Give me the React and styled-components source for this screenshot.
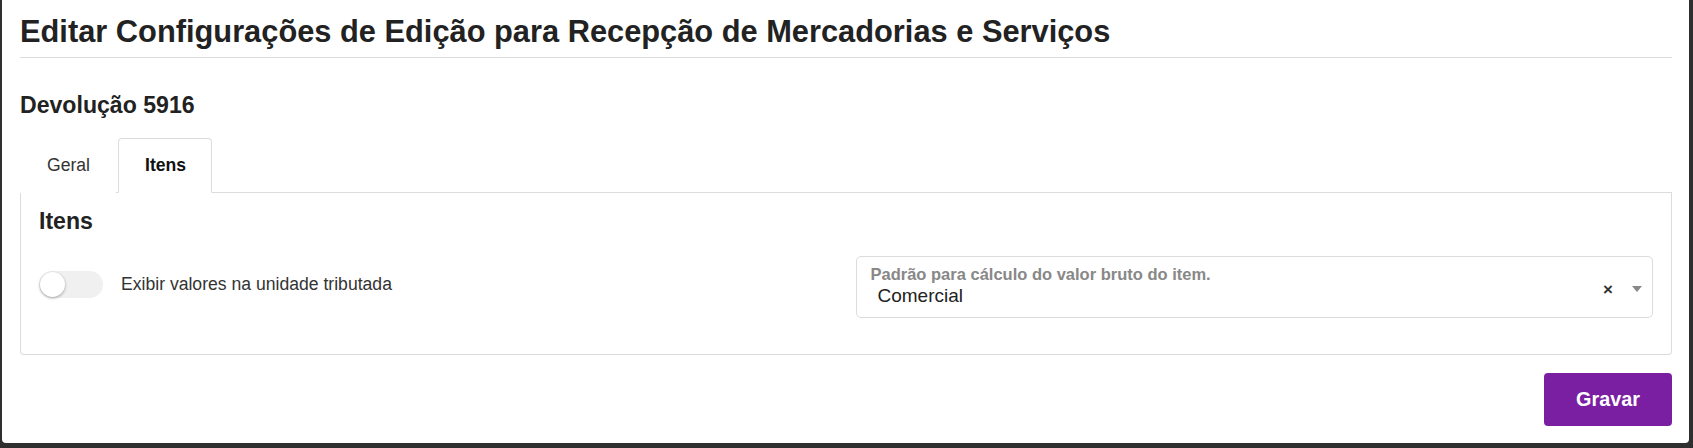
import styled, { createGlobalStyle } from "styled-components";

const Global = createGlobalStyle`
  html, body {
    margin: 0;
    padding: 0;
    background: #2f2f2f;
    min-height: 100vh;
  }
  body {
    font-family: "Liberation Sans", Arial, sans-serif;
    color: #222;
  }
`

const App = () => {
    return (
        <>
            <Global />
            <Modal>
                <Header>
                    <Title>Editar Configurações de Edição para Recepção de Mercadorias e Serviços</Title>
                </Header>

                <DocName>Devolução 5916</DocName>

                <Tabs>
                    <Tab>Geral</Tab>
                    <Tab active>Itens</Tab>
                </Tabs>

                <Panel>
                    <PanelTitle>Itens</PanelTitle>
                    <Row>
                        <ToggleField>
                            <Track>
                                <Knob />
                            </Track>
                            <span>Exibir valores na unidade tributada</span>
                        </ToggleField>

                        <Select>
                            <SelectText>
                                <SelectLabel>Padrão para cálculo do valor bruto do item.</SelectLabel>
                                <SelectValue>Comercial</SelectValue>
                            </SelectText>
                            <Clear>×</Clear>
                            <Caret />
                        </Select>
                    </Row>
                </Panel>

                <Footer>
                    <SaveBtn>Gravar</SaveBtn>
                </Footer>
            </Modal>
        </>
    );
}

export default App;


const Modal = styled.div`
    background: #fff;
    margin: 0 4px 0 2px;
    padding: 0 17px 17px 18px;
    border-radius: 0 0 4px 4px;
`
const Header = styled.div`
    padding: 14px 0 7px;
    border-bottom: 1px solid #dcdcdc;
`
const Title = styled.h1`
    margin: 0;
    font-size: 30.8px;
    line-height: 36px;
    font-weight: 700;
    color: #222;
`
const DocName = styled.h2`
    margin: 34px 0 0;
    font-size: 23.1px;
    line-height: 26px;
    font-weight: 700;
    color: #222;
`
const Tabs = styled.div`
    display: flex;
    margin-top: 20px;
    border-bottom: 1px solid #dcdcdc;
`
const Tab = styled.div`
    padding: 16px 25px 17px 26px;
    font-size: 17.6px;
    line-height: 20px;
    margin-right: 2px;
    margin-bottom: -1px;
    border: 1px solid ${p => p.active ? "#dcdcdc" : "transparent"};
    border-bottom-color: ${p => p.active ? "#fff" : "transparent"};
    border-radius: 4px 4px 0 0;
    font-weight: ${p => p.active ? 700 : 400};
    color: ${p => p.active ? "#111" : "#333"};
    background: #fff;
`
const Panel = styled.div`
    border: 1px solid #dcdcdc;
    border-top: none;
    border-radius: 0 0 4px 4px;
    padding: 15px 18px 36px;
`
const PanelTitle = styled.h3`
    margin: 0;
    font-size: 23.1px;
    line-height: 26px;
    font-weight: 700;
    color: #222;
`
const Row = styled.div`
    display: grid;
    grid-template-columns: 1fr 1fr;
    gap: 19px;
    align-items: center;
    margin-top: 22px;
`
const ToggleField = styled.div`
    display: flex;
    align-items: center;
    gap: 18px;
    margin-bottom: 5px;
    font-size: 17.6px;
    color: #333;
`
const Track = styled.div`
    width: 64px;
    height: 27px;
    border-radius: 14px;
    background: #f0f0f0;
    display: flex;
    align-items: center;
    flex-shrink: 0;
`
const Knob = styled.div`
    width: 25px;
    height: 25px;
    border-radius: 50%;
    background: #fff;
    box-shadow: 0 1px 3px rgba(0, 0, 0, 0.35);
    margin-left: 1px;
`
const Select = styled.div`
    box-sizing: border-box;
    height: 62px;
    border: 1px solid #dcdcdc;
    border-radius: 5px;
    display: flex;
    align-items: center;
    padding: 0 10px 0 14px;
`
const SelectText = styled.div`
    flex: 1;
    display: flex;
    flex-direction: column;
    margin-top: -3px;
`
const SelectLabel = styled.span`
    font-size: 16.5px;
    line-height: 18px;
    font-weight: 700;
    color: #888;
`
const SelectValue = styled.span`
    font-size: 19px;
    line-height: 22px;
    color: #222;
    padding-left: 7px;
    margin-top: 2px;
`
const Clear = styled.span`
    font-size: 17px;
    font-weight: 700;
    color: #333;
    line-height: 1;
    margin-right: 19px;
    margin-top: 4px;
`
const Caret = styled.span`
    width: 0;
    height: 0;
    border-left: 5.5px solid transparent;
    border-right: 5.5px solid transparent;
    border-top: 6px solid #888;
    margin-top: 4px;
`
const Footer = styled.div`
    display: flex;
    justify-content: flex-end;
    margin-top: 18px;
`
const SaveBtn = styled.button`
    width: 128px;
    height: 53px;
    background: #7b1fa2;
    color: #fff;
    border: none;
    border-radius: 4px;
    font-family: "Liberation Sans", Arial, sans-serif;
    font-size: 19.8px;
    font-weight: 700;
    cursor: pointer;
`
